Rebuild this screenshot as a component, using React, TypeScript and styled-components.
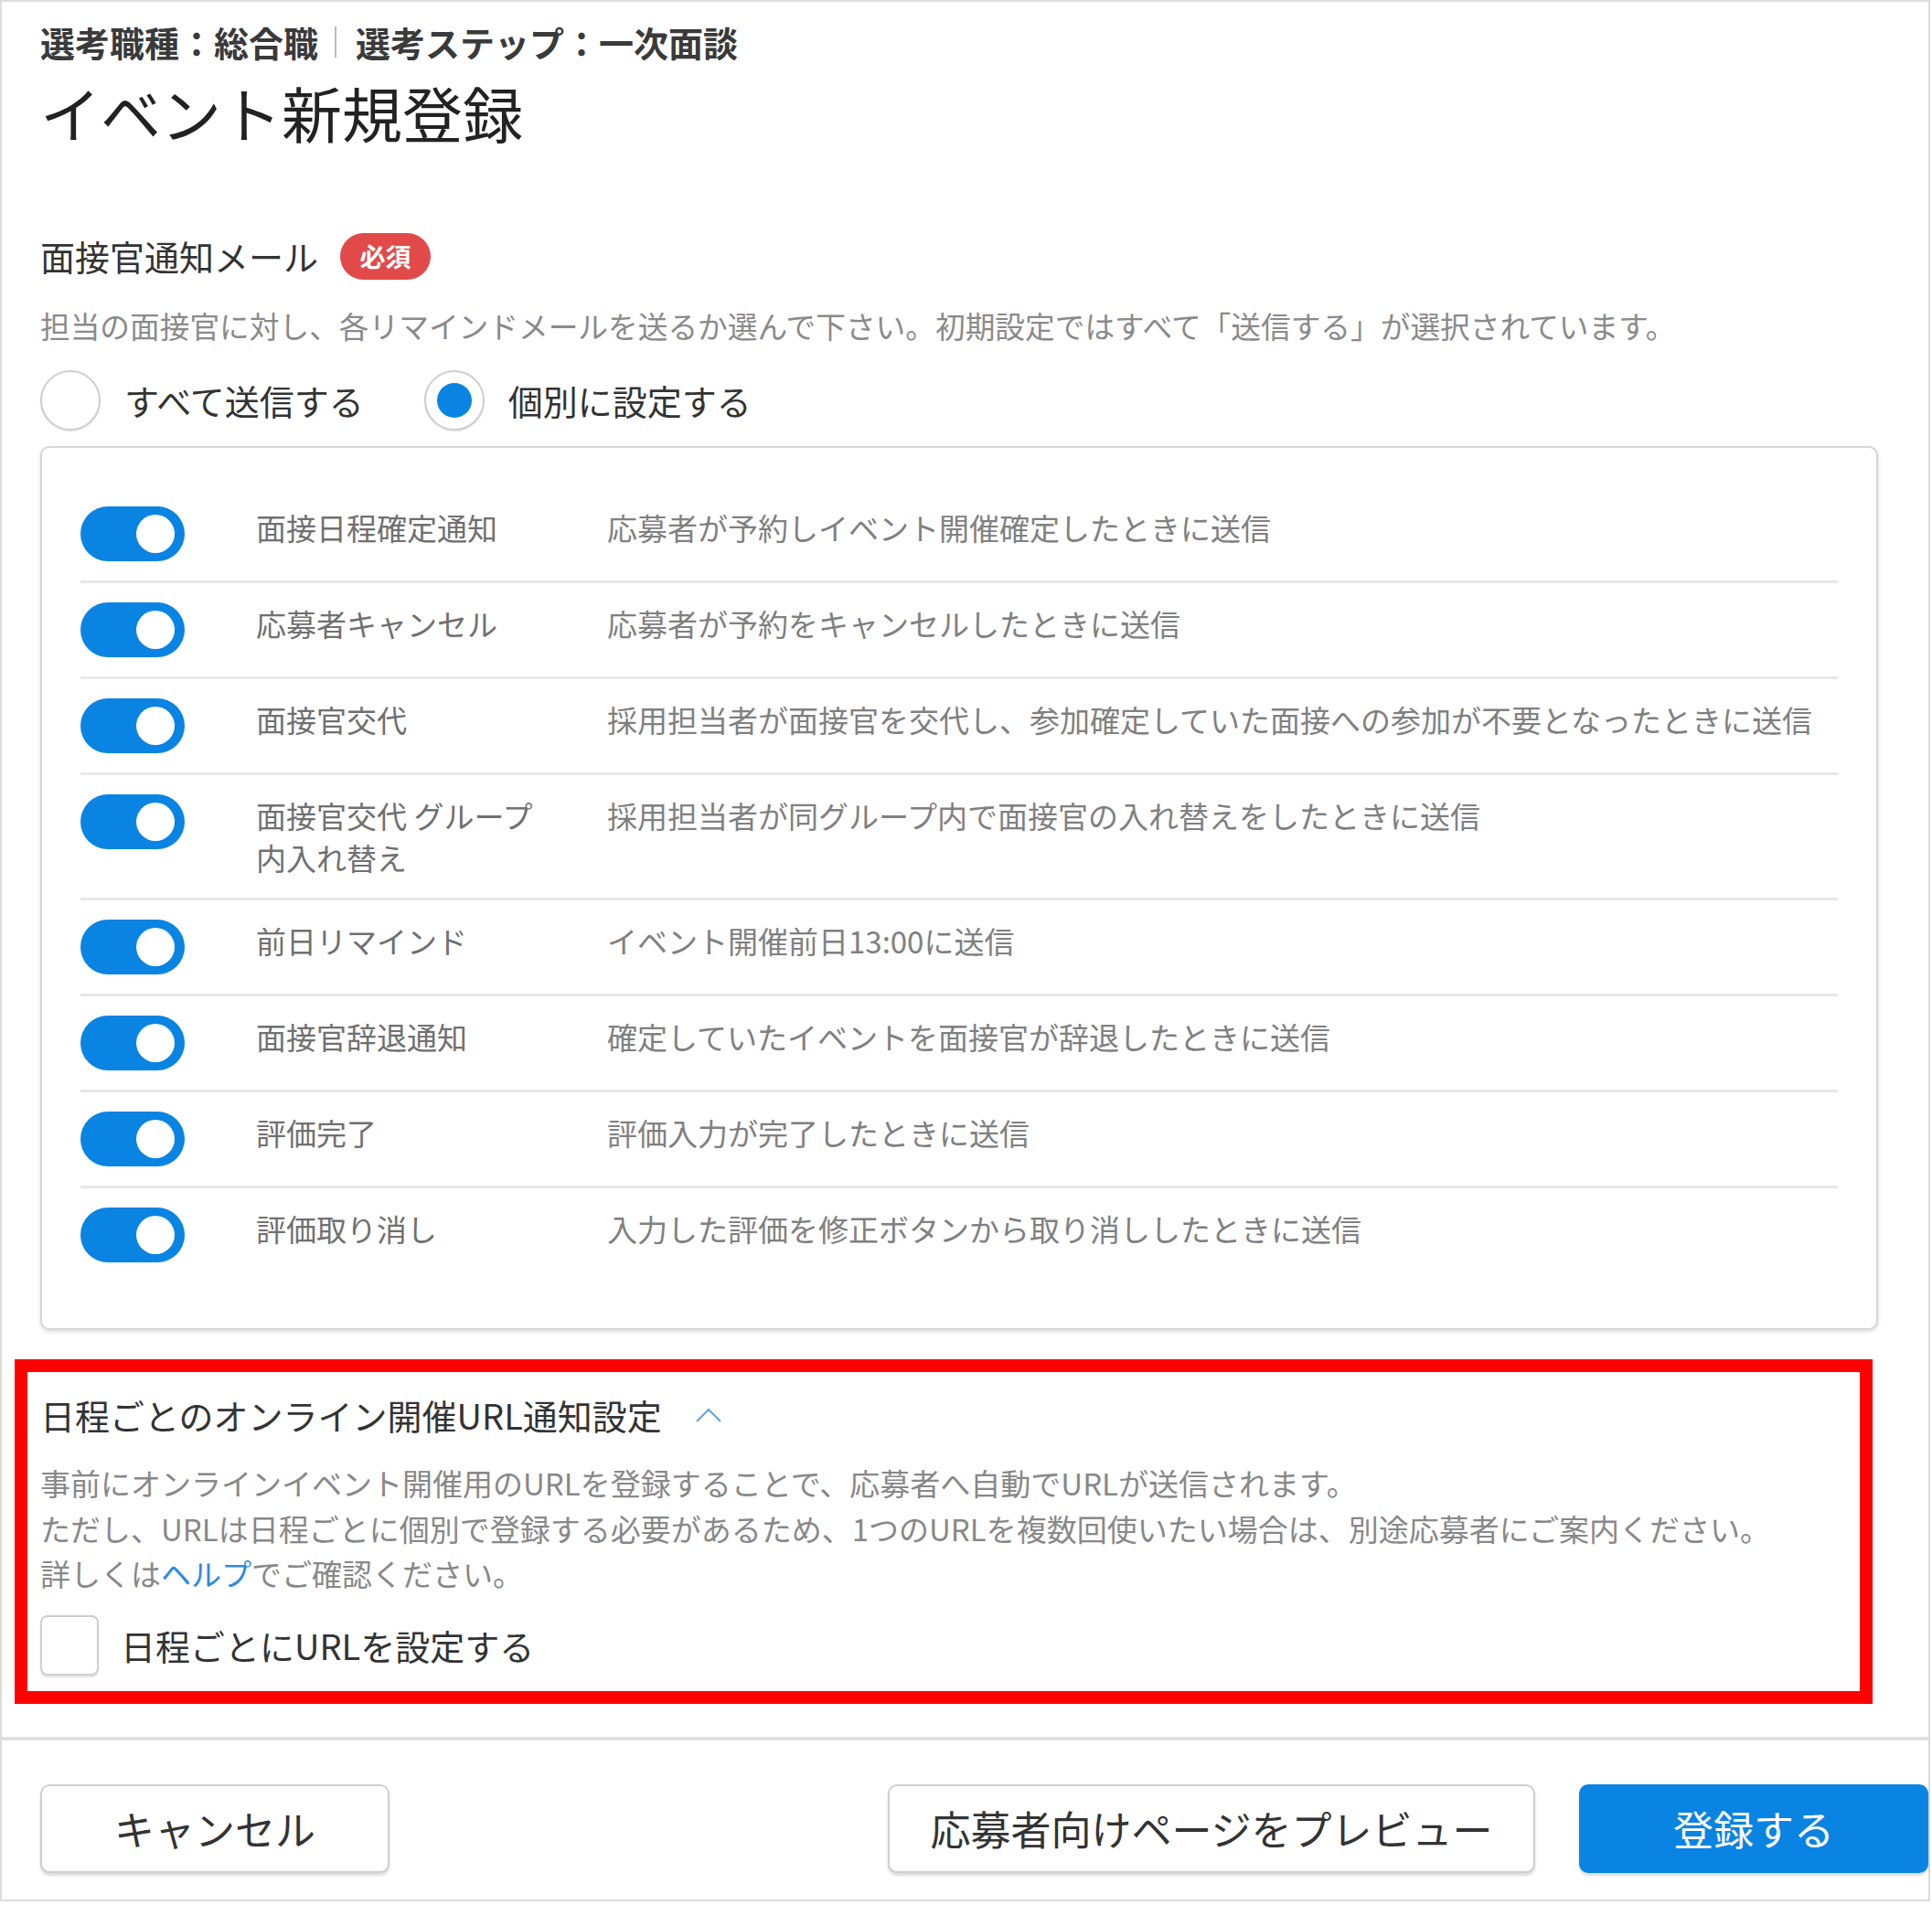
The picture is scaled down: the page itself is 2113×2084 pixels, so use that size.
import styled, { createGlobalStyle } from "styled-components";

const GlobalStyle = createGlobalStyle`
  html, body {
    margin: 0;
    padding: 0;
    background: #fff;
  }
  body {
    font-family: "Noto Sans CJK JP", "Noto Sans", sans-serif;
    color: #333;
  }
`;

const notifications = [
  { label: "面接日程確定通知", desc: "応募者が予約しイベント開催確定したときに送信" },
  { label: "応募者キャンセル", desc: "応募者が予約をキャンセルしたときに送信" },
  { label: "面接官交代", desc: "採用担当者が面接官を交代し、参加確定していた面接への参加が不要となったときに送信" },
  { label: "面接官交代 グループ内入れ替え", desc: "採用担当者が同グループ内で面接官の入れ替えをしたときに送信" },
  { label: "前日リマインド", desc: "イベント開催前日13:00に送信" },
  { label: "面接官辞退通知", desc: "確定していたイベントを面接官が辞退したときに送信" },
  { label: "評価完了", desc: "評価入力が完了したときに送信" },
  { label: "評価取り消し", desc: "入力した評価を修正ボタンから取り消ししたときに送信" },
];

const App = () => {
  return (
    <>
      <GlobalStyle />
      <Page>
        <Main>
          <Breadcrumb>
            <span>選考職種：総合職</span>
            <Separator />
            <span>選考ステップ：一次面談</span>
          </Breadcrumb>
          <Title>イベント新規登録</Title>

          <SectionHead>
            <SectionLabel>面接官通知メール</SectionLabel>
            <Badge>必須</Badge>
          </SectionHead>
          <Description>
            担当の面接官に対し、各リマインドメールを送るか選んで下さい。初期設定ではすべて「送信する」が選択されています。
          </Description>

          <RadioRow>
            <RadioOption>
              <RadioCircle />
              <OptionText>すべて送信する</OptionText>
            </RadioOption>
            <RadioOption>
              <RadioCircle $checked />
              <OptionText>個別に設定する</OptionText>
            </RadioOption>
          </RadioRow>

          <Panel>
            {notifications.map((n) => (
              <NotifyRow key={n.label}>
                <Toggle />
                <RowLabel>{n.label}</RowLabel>
                <RowDesc>{n.desc}</RowDesc>
              </NotifyRow>
            ))}
          </Panel>
        </Main>

        <UrlSection>
          <UrlHead>
            <UrlTitle>日程ごとのオンライン開催URL通知設定</UrlTitle>
            <Chevron viewBox="0 0 34 20" fill="none">
              <polyline points="4,17 17,4 30,17" stroke="#6aa4dc" strokeWidth="2.2" />
            </Chevron>
          </UrlHead>
          <UrlText>
            事前にオンラインイベント開催用のURLを登録することで、応募者へ自動でURLが送信されます。
            <br />
            ただし、URLは日程ごとに個別で登録する必要があるため、1つのURLを複数回使いたい場合は、別途応募者にご案内ください。
            <br />
            詳しくは<HelpLink>ヘルプ</HelpLink>でご確認ください。
          </UrlText>
          <CheckRow>
            <CheckBox />
            <OptionText>日程ごとにURLを設定する</OptionText>
          </CheckRow>
        </UrlSection>

        <Footer>
          <Button>キャンセル</Button>
          <FooterRight>
            <Button $wide>応募者向けページをプレビュー</Button>
            <Button $primary>登録する</Button>
          </FooterRight>
        </Footer>
      </Page>
    </>
  );
};

export default App;

const Page = styled.div`
  width: 2111px;
  box-sizing: border-box;
  border: 2px solid #dcdcdc;
  display: flex;
  flex-direction: column;
`;

const Main = styled.div`
  display: flex;
  flex-direction: column;
  padding: 20px 55px 0 42px;
`;

const Breadcrumb = styled.div`
  display: flex;
  align-items: center;
  font-size: 38px;
  line-height: 48px;
  font-weight: 700;
  color: #3a3a3a;
`;

const Separator = styled.span`
  width: 2px;
  height: 34px;
  background: #bbb;
  margin: 0 21px 0 18px;
`;

const Title = styled.h1`
  margin: 12px 0 0;
  font-size: 66px;
  line-height: 80px;
  font-weight: 400;
  color: #222;
`;

const SectionHead = styled.div`
  display: flex;
  align-items: center;
  gap: 24px;
  margin-top: 92px;
`;

const SectionLabel = styled.span`
  font-size: 38px;
  line-height: 52px;
  color: #333;
`;

const Badge = styled.span`
  display: inline-flex;
  align-items: center;
  justify-content: center;
  width: 99px;
  height: 51px;
  border-radius: 26px;
  background: #e24a4a;
  color: #fff;
  font-size: 28px;
  font-weight: 700;
`;

const Description = styled.p`
  margin: 28px 0 0;
  font-size: 32.7px;
  line-height: 44px;
  color: #8a8a8a;
`;

const RadioRow = styled.div`
  display: flex;
  align-items: center;
  gap: 66px;
  margin-top: 27px;
`;

const RadioOption = styled.label`
  display: flex;
  align-items: center;
  gap: 26px;
`;

const RadioCircle = styled.span<{ $checked?: boolean }>`
  position: relative;
  width: 66px;
  height: 66px;
  box-sizing: border-box;
  border-radius: 50%;
  border: 2px solid #cfcfcf;
  background: #fff;
  box-shadow: 0 1px 2px rgba(0, 0, 0, 0.12);

  &::after {
    content: "";
    display: ${(p) => (p.$checked ? "block" : "none")};
    position: absolute;
    inset: 12px;
    border-radius: 50%;
    background: #0a84e3;
  }
`;

const OptionText = styled.span`
  font-size: 38px;
  line-height: 52px;
  color: #333;
`;

const Panel = styled.div`
  margin-top: 17px;
  border: 2px solid #d6d6d6;
  border-radius: 10px;
  box-shadow: 0 2px 4px rgba(0, 0, 0, 0.14);
  padding: 43px 42px 51px;
  display: flex;
  flex-direction: column;
`;

const NotifyRow = styled.div`
  display: flex;
  align-items: flex-start;
  padding: 21px 0;
  border-bottom: 3px solid #e8e8e8;

  &:last-child {
    border-bottom: none;
  }
`;

const Toggle = styled.span`
  position: relative;
  flex: none;
  width: 114px;
  height: 60px;
  border-radius: 30px;
  background: #0a84e3;

  &::after {
    content: "";
    position: absolute;
    top: 9px;
    right: 11px;
    width: 42px;
    height: 42px;
    border-radius: 50%;
    background: #fff;
  }
`;

const RowLabel = styled.span`
  flex: none;
  width: 320px;
  margin: 0 30px 0 78px;
  font-size: 33px;
  line-height: 46px;
  color: #707070;
`;

const RowDesc = styled.span`
  margin: 0 0 0 34px;
  font-size: 33px;
  line-height: 46px;
  color: #808080;
`;

const UrlSection = styled.section`
  margin: 32px 0 0 14px;
  width: 2032px;
  box-sizing: border-box;
  border: 14px solid #ff0000;
  padding: 22px 14px 17px;
  display: flex;
  flex-direction: column;
`;

const UrlHead = styled.div`
  display: flex;
  align-items: center;
  gap: 34px;
`;

const UrlTitle = styled.span`
  font-size: 38px;
  line-height: 50px;
  color: #333;
`;

const Chevron = styled.svg`
  width: 34px;
  height: 20px;
`;

const UrlText = styled.p`
  margin: 25px 0 0;
  font-size: 33px;
  line-height: 49.5px;
  color: #888;
`;

const HelpLink = styled.a`
  color: #2b8ae2;
  text-decoration: none;
`;

const CheckRow = styled.label`
  display: flex;
  align-items: center;
  gap: 24px;
  margin-top: 20px;
`;

const CheckBox = styled.span`
  width: 64px;
  height: 66px;
  box-sizing: border-box;
  border: 2px solid #cfcfcf;
  border-radius: 8px;
  background: #fff;
  box-shadow: 0 2px 2px rgba(0, 0, 0, 0.12);
`;

const Footer = styled.footer`
  margin-top: 36px;
  border-top: 4px solid #e0e0e0;
  padding: 48px 0 29px 42px;
  display: flex;
  align-items: center;
  justify-content: space-between;
`;

const FooterRight = styled.div`
  display: flex;
  gap: 48px;
`;

const Button = styled.button<{ $primary?: boolean; $wide?: boolean }>`
  width: ${(p) => (p.$wide ? "708px" : "382px")};
  height: 97px;
  border-radius: 10px;
  border: ${(p) => (p.$primary ? "none" : "2px solid #cfcfcf")};
  background: ${(p) => (p.$primary ? "#0a84e3" : "#fff")};
  color: ${(p) => (p.$primary ? "#fff" : "#333")};
  box-shadow: 0 3px 3px rgba(0, 0, 0, 0.14);
  font-family: "Noto Sans CJK JP", "Noto Sans", sans-serif;
  font-size: 44px;
  padding: 0;
  cursor: pointer;
`;
